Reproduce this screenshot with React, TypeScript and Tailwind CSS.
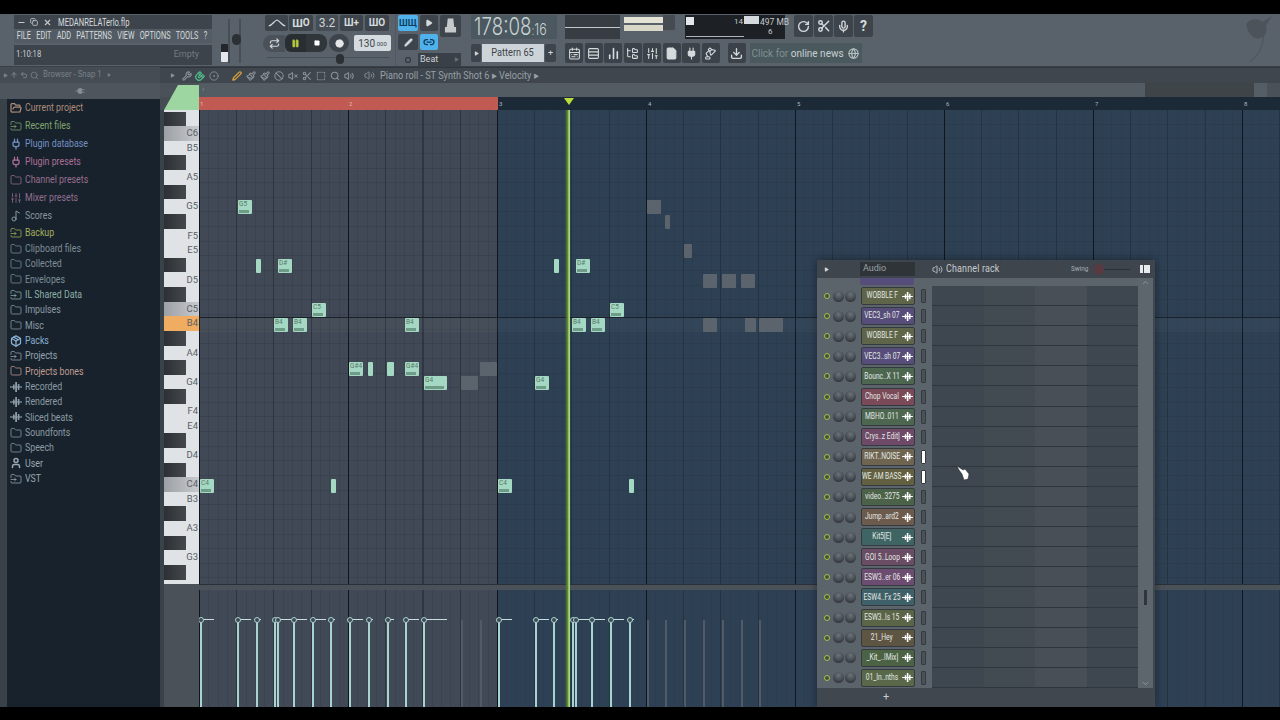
import type { ReactNode } from 'react';
import {
  Ban, CalendarRange, ChartNoAxesColumn, ChevronDown, ChevronUp, Circle, CircleDot, Download, File, Folder, FolderInput,
  FolderOpen, FolderTree, Globe, LampDesk, Link2, Magnet, Mic, Music2, Paintbrush, Pause, Pen, Play, Plug, Repeat, Rows3,
  RotateCw, Scissors, Search, SlidersVertical, Square, SquareDashed, User, Volume2, VolumeX, Wrench, Undo2, ArrowUp, X,
  Minus, Copy, Package,
} from 'lucide-react';

const browserItems = [
  { label: 'Current project', color: 'text-[#ad8c78]', icon: 'open', h: 'h-[18px]' },
  { label: 'Recent files', color: 'text-[#7fa46c]', icon: 'in', h: 'h-[18px]' },
  { label: 'Plugin database', color: 'text-[#7490c4]', icon: 'plug', h: 'h-[18px]' },
  { label: 'Plugin presets', color: 'text-[#ac6f98]', icon: 'plug', h: 'h-[18px]' },
  { label: 'Channel presets', color: 'text-[#97708e]', icon: 'folder', h: 'h-[18px]' },
  { label: 'Mixer presets', color: 'text-[#916f90]', icon: 'mix', h: 'h-[18px]' },
  { label: 'Scores', color: 'text-[#8796a0]', icon: 'note', h: 'h-[18px]' },
  { label: 'Backup', color: 'text-[#a2ae5c]', icon: 'in', h: 'h-[16px]' },
  { label: 'Clipboard files', color: 'text-[#7d8d97]', icon: 'folder', h: 'h-[15.35px]' },
  { label: 'Collected', color: 'text-[#7d8d97]', icon: 'folder', h: 'h-[15.35px]' },
  { label: 'Envelopes', color: 'text-[#7d8d97]', icon: 'folder', h: 'h-[15.35px]' },
  { label: 'IL Shared Data', color: 'text-[#8cb0a8]', icon: 'in', h: 'h-[15.35px]' },
  { label: 'Impulses', color: 'text-[#8b9ba5]', icon: 'folder', h: 'h-[15.35px]' },
  { label: 'Misc', color: 'text-[#8b9ba5]', icon: 'folder', h: 'h-[15.35px]' },
  { label: 'Packs', color: 'text-[#8ab0d0]', icon: 'pack', h: 'h-[15.35px]' },
  { label: 'Projects', color: 'text-[#96a4b0]', icon: 'in', h: 'h-[15.35px]' },
  { label: 'Projects bones', color: 'text-[#bf9c92]', icon: 'folder', h: 'h-[15.35px]' },
  { label: 'Recorded', color: 'text-[#8b9ba5]', icon: 'wave', h: 'h-[15.35px]' },
  { label: 'Rendered', color: 'text-[#8b9ba5]', icon: 'wave', h: 'h-[15.35px]' },
  { label: 'Sliced beats', color: 'text-[#8b9ba5]', icon: 'wave', h: 'h-[15.35px]' },
  { label: 'Soundfonts', color: 'text-[#8b9ba5]', icon: 'folder', h: 'h-[15.35px]' },
  { label: 'Speech', color: 'text-[#8b9ba5]', icon: 'folder', h: 'h-[15.35px]' },
  { label: 'User', color: 'text-[#9aa8b2]', icon: 'user', h: 'h-[15.35px]' },
  { label: 'VST', color: 'text-[#9aa8b2]', icon: 'in', h: 'h-[15.35px]' },
];

function BrowserIcon({ kind }: { kind: string }) {
  const cls = 'w-[12px] h-[12px]';
  if (kind === 'open') return <FolderOpen className={cls} strokeWidth={2.5} />;
  if (kind === 'in') return <FolderInput className={cls} strokeWidth={1.5} />;
  if (kind === 'plug') return <Plug className={cls} strokeWidth={2.5} />;
  if (kind === 'mix') return <SlidersVertical className={cls} strokeWidth={1.5} />;
  if (kind === 'note') return <Music2 className={cls} strokeWidth={2} />;
  if (kind === 'pack') return <Package className={cls} strokeWidth={2.5} />;
  if (kind === 'wave') return <WaveMark className="w-[12px] h-[10px]" />;
  if (kind === 'user') return <User className={cls} strokeWidth={3} />;
  return <Folder className={cls} strokeWidth={1.5} />;
}

// the little sample blip used on channel buttons and in the browser
function WaveMark({ className }: { className?: string }) {
  return (
    <svg viewBox="0 0 12 10" className={className} fill="currentColor">
      <rect x="0" y="4.4" width="12" height="1.2" />
      <rect x="3" y="2.5" width="1.6" height="5" />
      <rect x="5.2" y="0" width="1.8" height="10" />
      <rect x="7.8" y="2" width="1.6" height="6" />
    </svg>
  );
}

// name per piano key, top to bottom, starting at C#6
const keys = [
  'C#6', 'C6', 'B5', 'A#5', 'A5', 'G#5', 'G5', 'F#5', 'F5', 'E5', 'D#5', 'D5', 'C#5', 'C5', 'B4', 'A#4', 'A4',
  'G#4', 'G4', 'F#4', 'F4', 'E4', 'D#4', 'D4', 'C#4', 'C4', 'B3', 'A#3', 'A3', 'G#3', 'G3', 'F#3',
];

const notes = [
  { x: 238, y: 207, w: 14, t: 'G5' }, { x: 256, y: 266, w: 5, t: '' }, { x: 278, y: 266, w: 14, t: 'D#' },
  { x: 312, y: 310, w: 14, t: 'C5' }, { x: 274, y: 325, w: 14, t: 'B4' }, { x: 293, y: 325, w: 14, t: 'B4' },
  { x: 405, y: 325, w: 14, t: 'B4' }, { x: 349, y: 369, w: 14, t: 'G#4' }, { x: 368, y: 369, w: 5, t: '' },
  { x: 387, y: 369, w: 7, t: '' }, { x: 405, y: 369, w: 14, t: 'G#4' }, { x: 424, y: 383, w: 23, t: 'G4' },
  { x: 535, y: 383, w: 14, t: 'G4' }, { x: 200, y: 486, w: 14, t: 'C4' }, { x: 331, y: 486, w: 5, t: '' },
  { x: 498, y: 486, w: 14, t: 'C4' }, { x: 629, y: 486, w: 5, t: '' }, { x: 554, y: 266, w: 5, t: '' },
  { x: 576, y: 266, w: 14, t: 'D#' }, { x: 610, y: 310, w: 14, t: 'C5' }, { x: 572, y: 325, w: 14, t: 'B4' },
  { x: 591, y: 325, w: 14, t: 'B4' },
];

const ghosts = [
  { x: 461, y: 383, w: 17 }, { x: 480, y: 369, w: 17 }, { x: 647, y: 207, w: 14 }, { x: 665, y: 222, w: 5 },
  { x: 684, y: 251, w: 8 }, { x: 703, y: 281, w: 14 }, { x: 722, y: 281, w: 14 }, { x: 741, y: 281, w: 14 },
  { x: 703, y: 325, w: 14 }, { x: 745, y: 325, w: 11 }, { x: 759, y: 325, w: 24 },
];

const velocities = [
  { x: 200, w: 14 }, { x: 237, w: 14 }, { x: 256, w: 5 }, { x: 274, w: 0 }, { x: 277, w: 14 }, { x: 293, w: 14 },
  { x: 312, w: 14 }, { x: 330, w: 5 }, { x: 349, w: 14 }, { x: 368, w: 5 }, { x: 387, w: 7 }, { x: 405, w: 14 },
  { x: 423, w: 24 }, { x: 498, w: 14 }, { x: 535, w: 14 }, { x: 553, w: 5 }, { x: 572, w: 0 }, { x: 575, w: 14 },
  { x: 591, w: 14 }, { x: 610, w: 14 }, { x: 629, w: 5 },
];

const fadedVelocities = [461, 480, 647, 665, 684, 703, 722, 741, 759];

const channels = [
  { name: 'WOBBLE F', bg: 'bg-[#5f6548]' }, { name: 'VEC3_sh 07', bg: 'bg-[#564d7a]' },
  { name: 'WOBBLE F', bg: 'bg-[#5f6548]' }, { name: 'VEC3..sh 07', bg: 'bg-[#564d7a]' },
  { name: 'Bounc..X 11', bg: 'bg-[#4c6650]' }, { name: 'Chop Vocal', bg: 'bg-[#7a4a58]' },
  { name: 'MBHO..011', bg: 'bg-[#4c6650]' }, { name: 'Crys..z Edit]', bg: 'bg-[#6e4a68]' },
  { name: 'RIKT..NOISE', bg: 'bg-[#6e6450]', on: true }, { name: 'WE AM BASS', bg: 'bg-[#626040]', on: true },
  { name: 'video..3275', bg: 'bg-[#4c6248]' }, { name: 'Jump..ard2', bg: 'bg-[#6c5a4c]' },
  { name: 'Kit5[E]', bg: 'bg-[#3f6464]' }, { name: 'GOI 5..Loop', bg: 'bg-[#6a4c64]' },
  { name: 'ESW3..er 06', bg: 'bg-[#6c4c70]' }, { name: 'ESW4..Fx 25', bg: 'bg-[#3e6068]' },
  { name: 'ESW3..ls 15', bg: 'bg-[#5a6446]' }, { name: '21_Hey', bg: 'bg-[#5e5442]' },
  { name: '_Kit_..lMix]', bg: 'bg-[#4c6244]' }, { name: '01_In..nths', bg: 'bg-[#586848]' },
];

const iconCls = 'w-[13px] h-[13px]';

function Btn({ w, h = 'h-[16px]', children, bg = 'bg-[#3d444b]' }: { w: string; h?: string; children: ReactNode; bg?: string }) {
  return <div className={`${w} ${h} ${bg} rounded-[2px] flex items-center justify-center text-[#d5dadd] shrink-0`}>{children}</div>;
}

function Knob() {
  return <div className="w-[11px] h-[11px] rounded-full bg-[radial-gradient(circle_at_50%_30%,#6b737a,#23282d)] shrink-0" />;
}

function PanelGrid() {
  return (
    <div className="flex absolute inset-0">
      <div className="w-[299px] bg-[#404955]" />
      <div className="flex-1 bg-[#2d4054]" />
    </div>
  );
}

function GridLines({ rows }: { rows?: boolean }) {
  return (
    <>
      {rows && <div className="absolute inset-0 bg-[repeating-linear-gradient(180deg,#0000_0,#0000_13.64px,#26303b_13.64px,#26303b_14.64px)] opacity-25" />}
      <div className="absolute inset-0 bg-[repeating-linear-gradient(90deg,#28323d_0,#28323d_1px,#0000_1px,#0000_9.31px)] opacity-25" />
      <div className="absolute inset-0 bg-[repeating-linear-gradient(90deg,#222b35_0,#222b35_1px,#0000_1px,#0000_37.25px)] opacity-60" />
      <div className="absolute inset-0 bg-[repeating-linear-gradient(90deg,#10161c_0,#10161c_1px,#0000_1px,#0000_149px)]" />
    </>
  );
}

function Toolbar() {
  return (
    <div className="h-[53px] bg-[#59616a] flex text-[#d5dadd] border-b border-[#3a4047] shrink-0 relative">
      {/* title + menu */}
      <div className="ml-[14px] w-[198px] mt-px flex flex-col">
        <div className="h-[14px] bg-[#3d444b] flex items-center">
          <div className="w-[41px] flex items-center justify-around px-px text-[#c5cacd]">
            <Minus className="w-[9px] h-[9px]" strokeWidth={3} />
            <Copy className="w-[8px] h-[8px]" strokeWidth={2.5} />
            <X className="w-[9px] h-[9px]" strokeWidth={3} />
          </div>
          <span className="inline-block origin-left scale-x-[0.76] text-[10px] ml-[3px] text-[#d8dcdf] whitespace-nowrap">MEDANRELATerlo.flp</span>
        </div>
        <div className="h-[14px] bg-[#535c64]">
          <div className="w-[276px] h-full origin-left scale-x-[0.7] flex items-center justify-between pl-[4px] text-[10.5px] text-[#d5dadd] whitespace-nowrap">
            <span>FILE</span><span>EDIT</span><span>ADD</span><span>PATTERNS</span><span>VIEW</span><span>OPTIONS</span><span>TOOLS</span><span>?</span>
          </div>
        </div>
        <div className="h-[20px] bg-[#3c434a] mt-[2px] flex items-center justify-between pl-[2px] pr-[13px] text-[9px]">
          <span className="inline-block origin-left scale-x-[0.85] text-[#c8cdd0]">1:10:18</span>
          <span className="text-[#747b82]">Empty</span>
        </div>
      </div>
      {/* main sliders */}
      <div className="w-[51px] flex justify-center gap-[9px] pt-[5px] pr-[6px] relative">
        <div className="w-[2px] h-[44px] bg-[#474e55]" />
        <div className="w-[2px] h-[44px] bg-[#474e55]" />
        <div className="absolute left-[9px] top-[30px] w-[7px] h-[18px] bg-[linear-gradient(#23272b_45%,#e5e8ea_45%)] rounded-[1px]" />
        <div className="absolute left-[20px] top-[20px] w-[9px] h-[11px] bg-[#2b3035] rounded-full" />
      </div>
      {/* transport */}
      <div className="w-[132px] flex flex-col pt-px">
        <div className="flex gap-px h-[16px] pl-[2px]">
          <Btn w="w-[23px]"><svg viewBox="0 0 24 12" className="w-[18px] h-[10px]" fill="none" stroke="currentColor" strokeWidth="1.6"><path d="M1 10 C6 9 8 3 12 2 C16 3 18 9 23 10" /></svg></Btn>
          <Btn w="w-[24px]"><span className="text-[11px] font-bold leading-none">Ш</span><span className="text-[10px] font-bold leading-none">O</span></Btn>
          <Btn w="w-[22px]" bg="bg-[#454c53] ml-[2px]"><span className="text-[12px] leading-none text-[#cfd4d7]">3.2</span></Btn>
          <Btn w="w-[23px]" bg="bg-[#3d444b] ml-px"><span className="text-[10px] font-bold leading-none">Ш+</span></Btn>
          <Btn w="w-[24px]" bg="bg-[#3d444b] ml-px"><span className="text-[10px] font-bold leading-none">ШO</span></Btn>
        </div>
        <div className="flex items-center mt-[3px] h-[18px]">
          <div className="w-[22px] h-[17px] rounded-l-full bg-[#4a5158] flex items-center justify-center"><Repeat className="w-[11px] h-[11px]" strokeWidth={2.5} /></div>
          <div className="w-[21px] h-[18px] bg-[#292e33] rounded-l-md flex items-center justify-center"><Pause className="w-[9px] h-[9px] text-[#b9cf3e] fill-[#b9cf3e]" /></div>
          <div className="w-[21px] h-[18px] bg-[#31363b] rounded-r-lg flex items-center justify-center"><Square className="w-[6px] h-[6px] text-white fill-white" /></div>
          <div className="w-[20px] h-[18px] ml-[2px] rounded-full bg-[#3d444b] flex items-center justify-center"><Circle className="w-[9px] h-[9px] text-[#e4e6e8] fill-[#e4e6e8]" /></div>
          <div className="w-[37px] h-[16px] ml-[5px] rounded-[2px] bg-[#d4dcdf] text-[#3c444a] text-[10px] flex items-center justify-center">130<span className="text-[6px] mt-px">.000</span></div>
        </div>
        <div className="relative mt-[5px] ml-[4px] h-[8px] w-[122px] border-t border-[#474e55]">
          <div className="absolute left-[69px] -top-[4px] w-[8px] h-[10px] rounded-full bg-[#2b3035]" />
        </div>
      </div>
      {/* snap + stamp */}
      <div className="w-[66px] pl-[2px] flex flex-col pt-px border-l border-[#50575e]">
        <div className="flex gap-[2px]">
          <Btn w="w-[20px]" bg="bg-[#4fb2ea]"><span className="text-[9px] text-[#0d3f66] font-bold leading-none">ШЩ</span></Btn>
          <Btn w="w-[18px]"><Play className="w-[8px] h-[8px] fill-current" /></Btn>
          <Btn w="w-[21px]" h="h-[22px]"><svg viewBox="0 0 14 18" className="w-[13px] h-[18px]" fill="#c5c9cc"><path d="M4 1h6l1 9h2v6H1v-6h2z" /></svg></Btn>
        </div>
        <div className="flex gap-[2px] -mt-[3px]">
          <Btn w="w-[20px]"><Pen className="w-[9px] h-[9px] fill-current" /></Btn>
          <Btn w="w-[18px]" bg="bg-[#4fb2ea]"><Link2 className="w-[12px] h-[12px] text-[#0e3a5c]" strokeWidth={2.5} /></Btn>
        </div>
        <div className="flex items-center mt-[3px]">
          <div className="w-[20px] flex justify-center"><Circle className="w-[6px] h-[6px] text-[#33393f]" strokeWidth={5} /></div>
          <div className="w-[43px] h-[13px] bg-[#3a4047] text-[9px] flex items-center justify-between px-[2px] text-[#cdd2d5]"><span>Beat</span><Play className="w-[5px] h-[5px] fill-[#6b7279] text-[#6b7279]" /></div>
        </div>
      </div>
      {/* time + pattern + tools */}
      <div className="flex flex-col ml-[10px] pt-px">
        <div className="flex h-[24px]">
          <div className="w-[86px] bg-[#4c5860]">
            <div className="w-[110px] origin-left scale-x-[0.78] text-[#c6d3d3] flex items-baseline pl-[4px] font-['Inter'] font-light leading-none whitespace-nowrap">
              <span className="text-[24px]">178:08</span><span className="text-[13px]">:</span><span className="text-[16px]">16</span>
            </div>
          </div>
          <div className="w-[55px] ml-[8px] bg-[#373d43] relative flex items-center">
            <div className="w-full h-px bg-[#c2c8cb]" />
          </div>
          <div className="w-[39px] ml-[4px] flex flex-col gap-[2px] pt-[2px]">
            <div className="h-[6px] bg-[#e5e3d5]" />
            <div className="h-[6px] bg-[#d9d7c8]" />
          </div>
          <div className="w-[12px] h-[15px] bg-[#454b51]" />
          <div className="w-[100px] ml-[10px] bg-[#1d2125] relative text-[8px] text-[#c5cacd]">
            <div className="absolute left-px top-[2px] w-[8px] h-[8px] bg-[#e5e8ea]" />
            <span className="absolute left-[49px] top-[1px]">14</span>
            <div className="absolute left-[59px] top-px w-[15px] h-[8px] bg-[#d5dadf]" />
            <span className="absolute left-[75px] top-[1px] text-[8.5px] whitespace-nowrap">497 MB</span>
            <span className="absolute left-[83px] top-[11px]">6</span>
            <div className="absolute left-px bottom-[2px] w-[58px] h-px bg-[#aeb4b8]" />
          </div>
          <div className="flex ml-[9px] gap-px">
            <Btn w="w-[19px]" h="h-[22px]"><RotateCw className={iconCls} strokeWidth={2.5} /></Btn>
            <Btn w="w-[19px]" h="h-[22px]"><Scissors className="w-[14px] h-[14px]" strokeWidth={2.5} /></Btn>
            <Btn w="w-[19px]" h="h-[22px]"><Mic className={iconCls} strokeWidth={2.5} /></Btn>
            <Btn w="w-[19px]" h="h-[22px]"><span className="text-[14px] font-bold">?</span></Btn>
          </div>
        </div>
        <div className="flex mt-[4px] h-[20px] items-center">
          <Btn w="w-[10px]" h="h-[18px]"><Play className="w-[5px] h-[5px] fill-current" /></Btn>
          <div className="w-[62px] h-[18px] ml-[1px] bg-[#cdd4d9] text-[#3b4248] text-[11.5px] flex items-center justify-center whitespace-nowrap">
            <span className="inline-block scale-x-[0.8]">Pattern 65</span>
          </div>
          <Btn w="w-[11px]" h="h-[18px]" bg="bg-[#3d444b] ml-px"><span className="text-[9px] leading-none">+</span></Btn>
          <div className="flex gap-[1.5px] ml-[9px]">
            <Btn w="w-[18px]" h="h-[20px]" bg="bg-[#3b4249]"><CalendarRange className={iconCls} strokeWidth={2} /></Btn>
            <Btn w="w-[18px]" h="h-[20px]" bg="bg-[#3b4249]"><Rows3 className={iconCls} strokeWidth={2} /></Btn>
            <Btn w="w-[18px]" h="h-[20px]" bg="bg-[#3b4249]"><ChartNoAxesColumn className={iconCls} strokeWidth={3} /></Btn>
            <Btn w="w-[18px]" h="h-[20px]" bg="bg-[#3b4249]"><FolderTree className={iconCls} strokeWidth={2} /></Btn>
            <Btn w="w-[18px]" h="h-[20px]" bg="bg-[#3b4249]"><SlidersVertical className={iconCls} strokeWidth={2} /></Btn>
            <Btn w="w-[18px]" h="h-[20px]" bg="bg-[#3b4249]"><File className={`${iconCls} fill-current`} strokeWidth={2} /></Btn>
            <Btn w="w-[18px]" h="h-[20px]" bg="bg-[#3b4249]"><Plug className={`${iconCls} fill-current`} strokeWidth={2} /></Btn>
            <Btn w="w-[18px]" h="h-[20px]" bg="bg-[#3b4249]"><LampDesk className={iconCls} strokeWidth={2} /></Btn>
          </div>
          <Btn w="w-[18px]" h="h-[20px]" bg="bg-[#3b4249] ml-[8px]"><Download className={iconCls} strokeWidth={2.5} /></Btn>
          <div className="w-[112px] h-[20px] ml-[4px] bg-[#4a595d] flex items-center justify-between pl-[2px] pr-[3px] text-[10px] whitespace-nowrap">
            <span><span className="text-[#7f9092]">Click for </span><span className="text-[#c9d1d3]">online news</span></span>
            <Globe className="w-[11px] h-[11px] text-[#b9c3c5]" strokeWidth={2.5} />
          </div>
        </div>
      </div>
      {/* corner bird */}
      <svg viewBox="0 0 32 50" className="absolute right-[4px] top-0 w-[32px] h-[50px] text-[#4c535a]" fill="currentColor">
        <path d="M2 10 C6 4 14 4 18 8 L28 2 L22 12 C24 18 20 24 16 24 C10 26 4 20 2 10 Z" />
        <path d="M20 22 C18 34 14 42 6 48" fill="none" stroke="currentColor" />
      </svg>
    </div>
  );
}

function Browser() {
  return (
    <div className="w-[160px] flex flex-col bg-[#454c53] shrink-0">
      <div className="h-[16px] flex items-center gap-[2px] pl-[3px] text-[#79828a] text-[9px] bg-[#454c53]">
        <Play className="w-[5px] h-[5px] fill-current" />
        <ArrowUp className="w-[8px] h-[8px]" strokeWidth={3} />
        <Undo2 className="w-[8px] h-[8px]" strokeWidth={3} />
        <Search className="w-[9px] h-[9px]" />
        <span className="ml-[2px] inline-block w-[60px] origin-left scale-x-[0.87] whitespace-nowrap">Browser - Snap 1</span>
        <Play className="w-[4px] h-[4px] ml-[2px] fill-current" />
      </div>
      <div className="h-[16px] flex items-center justify-center bg-[#4e555c] text-[#878e95]">
        <Plug className="w-[10px] h-[10px] rotate-90 fill-current" />
      </div>
      <div className="flex-1 flex">
        <div className="w-[7px] bg-[#3a4249]" />
        <div className="flex-1 bg-[#18222c] flex flex-col">
          {browserItems.map((item) => (
            <div key={item.label} className={`${item.h} flex items-center pl-[3px] gap-[2px] text-[11px] whitespace-nowrap ${item.color}`}>
              <BrowserIcon kind={item.icon} />
              <span className="ml-px pt-px inline-block origin-left scale-x-[0.8]">{item.label}</span>
            </div>
          ))}
        </div>
      </div>
    </div>
  );
}

function Keyboard() {
  return (
    <div className="h-[474px] w-[35px] overflow-hidden bg-[#dfe3e6] flex flex-col shrink-0">
      <div className="h-[1.5px] shrink-0" />
      {keys.map((k) => {
        const black = k.includes('#');
        const isC = k.startsWith('C') && !black;
        const hot = k === 'B4';
        return (
          <div
            key={k}
            className={`h-[14.64px] shrink-0 flex items-center justify-end pr-px text-[9.5px] text-[#5a6066] ${
              hot ? 'bg-[#f0ad62]' : isC ? 'bg-[linear-gradient(90deg,#9c9fa3,#c7cace)]' : ''
            }`}
          >
            {black ? <div className="mr-auto w-[22px] h-full bg-[linear-gradient(90deg,#2c2f33,#45494e)]" /> : k}
          </div>
        );
      })}
    </div>
  );
}

function PianoRollGrid() {
  return (
    <div className="flex-1 relative overflow-hidden">
      <div className="flex flex-col absolute inset-0 pr-[12px]">
        {/* note grid */}
        <div className="h-[474px] relative overflow-hidden">
          <PanelGrid />
          <GridLines rows />
          <div className="absolute left-0 right-0 top-[207px] h-[15px] bg-[#ffffff08] border-t border-[#1a212a]" />
          {ghosts.map((n, i) => (
            <div key={i} className="absolute h-[14px] bg-[#5b636d] rounded-[1px]" style={{ left: n.x - 199, top: n.y - 110 - 7, width: n.w }} />
          ))}
          {notes.map((n, i) => (
            <div key={i} className="absolute h-[14px] bg-[#a5d8c2] rounded-[1px] overflow-hidden text-[6.5px] leading-[8px] pl-px text-[#55786a]" style={{ left: n.x - 199, top: n.y - 110 - 7, width: n.w }}>
              {n.t}
              {n.t && <div className="absolute left-px right-[3px] bottom-px h-[3px] bg-[#6f9c88]" />}
            </div>
          ))}
        </div>
        {/* splitter */}
        <div className="h-[6px] bg-[#4a5158] border-t border-[#2a3037]" />
        {/* velocity lane */}
        <div className="flex-1 relative overflow-hidden">
          <PanelGrid />
          <GridLines />
          {fadedVelocities.map((x) => (
            <div key={x} className="absolute top-[30px] bottom-0 w-[2px] bg-[#525a65]" style={{ left: x - 199 }} />
          ))}
          {velocities.map((v) => (
            <div key={v.x} className="absolute top-[30px] bottom-0 w-[2px] bg-[#a8d4d0]" style={{ left: v.x - 199 }}>
              <div className="absolute left-0 -top-px h-[1px] bg-[#c5e0dc]" style={{ width: v.w }} />
              <div className="absolute -left-[2px] -top-[3px] w-[6px] h-[6px] rounded-full border border-[#a8d4d0] bg-[#3f4853]" />
            </div>
          ))}
        </div>
      </div>
      {/* playhead */}
      <div className="absolute left-[366px] top-0 bottom-0 w-[5px] bg-[linear-gradient(90deg,#0000,#5d8a30_50%,#8fc060_70%,#b8e090)]" />
      {/* side scrollbar */}
      <div className="absolute right-0 top-0 bottom-0 w-[12px] bg-[#3a3f44] border-l border-[#2e3338]">
        <div className="absolute left-0 right-0 top-[256px] h-[20px] bg-[#616870]" />
        <div className="absolute left-0 right-0 top-[461px] h-[13px] bg-[#555c63] flex items-center justify-center"><ChevronDown className="w-[8px] h-[8px] text-[#8a9198]" /></div>
        <div className="absolute left-0 right-0 top-[480px] h-[13px] bg-[#555c63] flex items-center justify-center"><ChevronUp className="w-[8px] h-[8px] text-[#8a9198]" /></div>
      </div>
    </div>
  );
}

function PianoRoll() {
  const tools = [Paintbrush, Paintbrush, Ban, VolumeX, Scissors, SquareDashed, Search, Volume2];
  const numbers = [3, 4, 5, 6, 7, 8];
  return (
    <div className="flex-1 flex flex-col relative bg-[#454c53]">
      {/* tools row */}
      <div className="h-[16px] flex items-center text-[#8b939a] shrink-0 bg-[#3f464d] border-t border-[#30363c]">
        <Play className="w-[5px] h-[5px] ml-[10px] fill-current" />
        <Wrench className="w-[10px] h-[10px] ml-[7px]" strokeWidth={2.5} />
        <Magnet className="w-[10px] h-[10px] ml-[3px] text-[#4fb888] rotate-180" strokeWidth={3} />
        <CircleDot className="w-[10px] h-[10px] ml-[4px]" />
        <Pen className="w-[10px] h-[10px] ml-[13px] text-[#dca23e]" strokeWidth={3} />
        {tools.map((Icon, i) => (
          <Icon key={i} className="w-[10px] h-[10px] ml-[4px]" strokeWidth={2.5} />
        ))}
        <Volume2 className="w-[11px] h-[11px] ml-[10px]" strokeWidth={2} />
        <span className="ml-[5px] inline-block origin-left scale-x-[0.87] text-[10.5px] text-[#98a0a7] whitespace-nowrap">Piano roll - ST Synth Shot 6 ▸ Velocity ▸</span>
        <div className="ml-auto flex items-center gap-[3px] pr-[2px] text-[#9aa1a7]">
          <Minus className="w-[9px] h-[9px]" strokeWidth={3} />
          <Square className="w-[7px] h-[7px]" strokeWidth={2.5} />
          <X className="w-[9px] h-[9px]" strokeWidth={3} />
        </div>
      </div>
      {/* scroll row */}
      <div className="h-[14px] flex shrink-0 pl-[39px] bg-[#4a5158]">
        <div className="w-[946px] bg-[#545c63] flex items-center pl-[3px] text-[#878e95] text-[8px]">‹</div>
        <div className="w-[109px] bg-[#3f4449]" />
        <div className="w-[13px] bg-[#565e65]" />
      </div>
      {/* ruler */}
      <div className="h-[13px] flex shrink-0">
        <div className="w-[4px]" />
        <div className="w-[35px] relative">
          <div className="absolute left-0 right-0 -top-[12px] h-[25px] bg-[#9ed6a2] [clip-path:polygon(40%_0,100%_0,100%_100%,0_100%)]" />
        </div>
        <div className="w-[299px] bg-[#c05a52] text-[#e9b7ac] text-[6px] leading-[13px] pl-px flex">
          <span className="w-[149px]">1</span><span>2</span>
        </div>
        <div className="flex-1 bg-[#1c2a38] text-[#a9b6be] text-[6px] leading-[13px] flex relative">
          {numbers.map((n) => (
            <span key={n} className="w-[149px] pl-px shrink-0">{n}</span>
          ))}
          <div className="absolute left-[66px] top-px w-0 h-0 border-l-[5px] border-r-[5px] border-t-[7px] border-l-transparent border-r-transparent border-t-[#b9de3a]" />
        </div>
      </div>
      {/* keys + grid */}
      <div className="flex-1 flex min-h-0">
        <div className="w-[4px] bg-[#3a4249] shrink-0" />
        <div className="w-[35px] flex flex-col shrink-0">
          <Keyboard />
          <div className="flex-1 bg-[#4a5159]" />
        </div>
        <PianoRollGrid />
      </div>
    </div>
  );
}

function ChannelRack() {
  return (
    <div className="absolute left-[817px] top-[260px] w-[338px] h-[447px] bg-[#40474e] flex flex-col text-[#d5dadd] shadow-[0_0_8px_#0006]">
      <div className="h-[18px] bg-[#3e454c] flex items-center shrink-0 relative whitespace-nowrap">
        <Play className="w-[5px] h-[5px] ml-[7px] fill-current shrink-0" />
        <div className="ml-[31px] w-[55px] h-[14px] bg-[#2f3439] text-[9px] flex items-center pl-[3px] text-[#9aa2a8] shrink-0">Audio</div>
        <Volume2 className="w-[11px] h-[11px] ml-[17px] text-[#c0c6ca] shrink-0" strokeWidth={2} />
        <span className="ml-[3px] w-[54px] inline-block origin-left scale-x-[0.85] text-[10.5px] text-[#c6cbcf] tracking-[0.2px] shrink-0">Channel rack</span>
        <span className="ml-[71px] w-[20px] inline-block origin-left scale-x-[0.8] text-[8px] text-[#a6adb3] shrink-0">Swing</span>
        <div className="ml-[3px] w-[10px] h-[11px] rounded-full bg-[#5a3a42] shrink-0" />
        <div className="w-[26px] h-px bg-[#2b3035] shrink-0" />
        <div className="ml-[10px] w-[10px] h-[8px] bg-[repeating-linear-gradient(90deg,#e8ebed_0,#e8ebed_3px,#0000_3px,#0000_3.5px)] shrink-0" />
      </div>
      <div className="flex-1 flex min-h-0">
        <div className="flex-1 overflow-hidden flex flex-col">
          <div className="h-[8px] shrink-0 flex bg-[#5b636b]">
            <div className="ml-[43px] w-[54px] h-[7px] bg-[#564d7a] rounded-b-[2px]" />
          </div>
          {channels.map((c, i) => (
            <div key={i} className="h-[20.1px] shrink-0 flex">
              <div className="w-[115px] bg-[#5b636b] flex items-center pl-[7px] relative">
                <div className="w-[6px] h-[6px] rounded-full bg-[#46503a] border border-[#a4c34a] shrink-0" />
                <div className="ml-[3px]"><Knob /></div>
                <div className="ml-[1px]"><Knob /></div>
                <div className={`ml-[5px] w-[54px] h-[18px] ${c.bg} rounded-[2px] border border-[#343a40] flex items-center shrink-0`}>
                  <div className="w-[40px] flex justify-center shrink-0">
                    <span className="inline-block scale-x-[0.74] text-[9px] text-[#e3e8e4] whitespace-nowrap">{c.name}</span>
                  </div>
                  <WaveMark className="w-[11px] h-[9px] text-white shrink-0" />
                </div>
                <div className={`ml-[6px] w-[5px] h-[14px] rounded-[1px] border border-[#343a40] ${c.on ? 'bg-white' : 'bg-[#4a5159]'}`} />
              </div>
              <div className="flex-1 grid grid-cols-4 border-b border-[#2f363d]">
                <div className="bg-[#3e4650]" />
                <div className="bg-[#424a52]" />
                <div className="bg-[#484f56]" />
                <div className="bg-[#3e464f]" />
              </div>
            </div>
          ))}
        </div>
        <div className="w-[15px] bg-[#5e666d] flex flex-col items-center justify-between mr-[2px] shrink-0 relative">
          <ChevronUp className="w-[9px] h-[9px] text-[#9aa1a7]" />
          <div className="absolute top-[312px] w-[3px] h-[15px] bg-[#2f353b]" />
          <ChevronDown className="w-[9px] h-[9px] text-[#9aa1a7]" />
        </div>
      </div>
      <div className="h-[19px] bg-[#40474e] flex items-center shrink-0 pl-[66px] text-[11px] text-[#c6cbcf]">+</div>
    </div>
  );
}

export default function App() {
  return (
    <div className="w-[1280px] h-[720px] bg-black overflow-hidden flex flex-col relative font-['Roboto',sans-serif]">
      <div className="h-[14px] shrink-0" />
      <Toolbar />
      <div className="h-[640px] flex shrink-0">
        <Browser />
        <PianoRoll />
      </div>
      <ChannelRack />
      <svg viewBox="0 0 14 16" className="absolute left-[956px] top-[465px] w-[14px] h-[16px]" fill="white" stroke="#222" strokeWidth="0.5">
        <path d="M1 1 L7 5 L9 4 L13 9 L12 14 L8 15 L6 9 L3 5 Z" />
      </svg>
    </div>
  );
}
